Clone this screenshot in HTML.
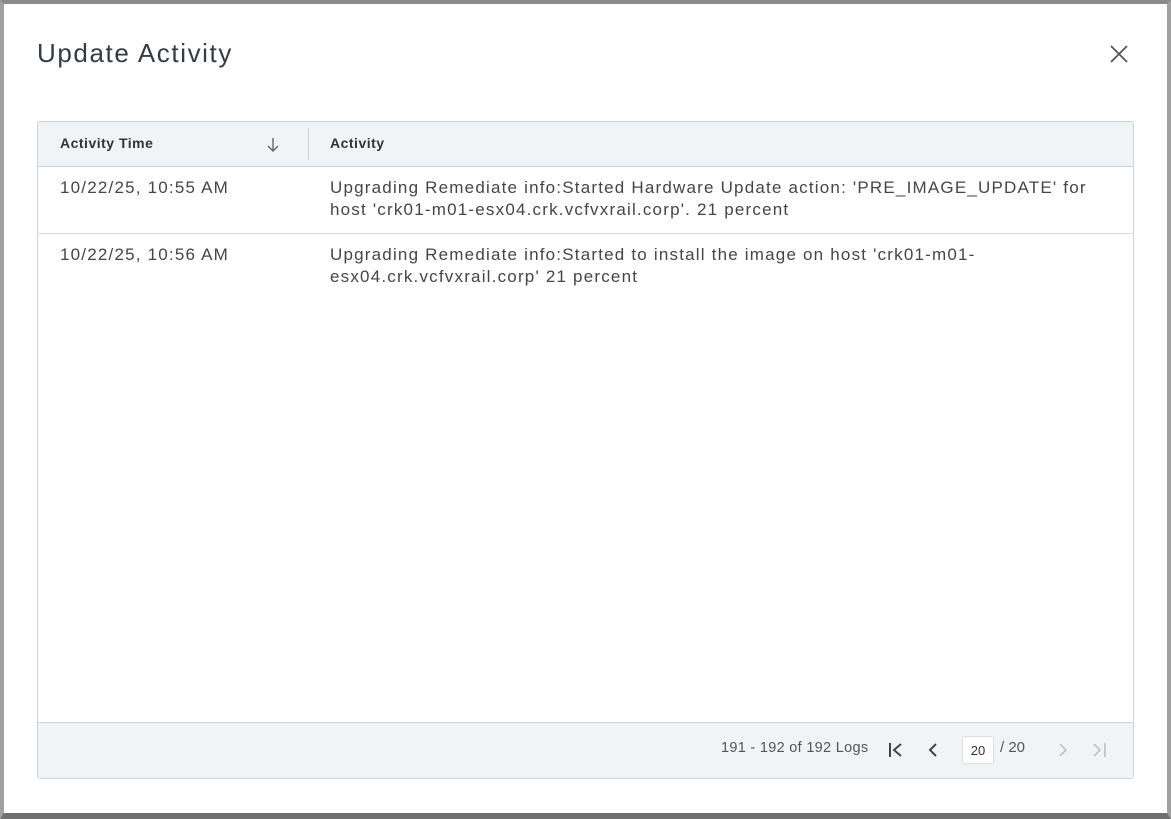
<!DOCTYPE html><html><head><style>
body{margin:0;width:1171px;height:819px;background:#fff;font-family:"Liberation Sans",sans-serif;overflow:hidden;position:relative}
.frame{position:absolute;left:0;top:0;width:1171px;height:819px;box-sizing:border-box;border-top:4px solid #8a8a8a;border-left:4px solid #a0a0a0;border-right:4px solid #a0a0a0;border-bottom:6px solid #707070}
h1{position:absolute;left:37px;top:38px;margin:0;font-size:26px;font-weight:normal;color:#333c45;letter-spacing:1.6px}
.x{position:absolute;left:1109px;top:44px}
.grid{position:absolute;left:37px;top:121px;width:1097px;height:658px;border:1px solid #ccd3d9;border-radius:3px;box-sizing:border-box;overflow:hidden}
.hd{height:44px;background:#f1f4f6;border-bottom:1px solid #ccd3d9;position:relative;font-size:14px;font-weight:bold;color:#333;letter-spacing:0.5px}
.hd span{position:absolute;top:13px}
.row{border-bottom:1px solid #d7dde2;position:relative;font-size:17px;color:#454545;line-height:22px;letter-spacing:1.2px}
.row .t{position:absolute;left:22px;top:10px}
.row .a{position:absolute;left:292px;top:10px;white-space:nowrap}
.ft{position:absolute;left:0;right:0;bottom:0;height:55px;background:#f1f4f6;border-top:1px solid #ccd3d9;font-size:14.5px;color:#555}
</style></head><body>
<div class="frame"></div>
<h1>Update Activity</h1>
<svg class="x" width="20" height="20" viewBox="0 0 20 20"><path d="M2 2L18 18M18 2L2 18" stroke="#555" stroke-width="1.8"/></svg>
<div class="grid">
<div class="hd"><span style="left:22px">Activity Time</span>
<svg style="position:absolute;left:229px;top:15px" width="12" height="16" viewBox="0 0 12 16"><path d="M6 1V14M1 9L6 14L11 9" stroke="#666" stroke-width="1.4" fill="none"/></svg>
<div style="position:absolute;left:270px;top:6px;width:1px;height:32px;background:#ccd3d9"></div>
<span style="left:292px">Activity</span></div>
<div class="row" style="height:66px"><span class="t">10/22/25, 10:55 AM</span><span class="a">Upgrading Remediate info:Started Hardware Update action: 'PRE_IMAGE_UPDATE' for<br>host 'crk01-m01-esx04.crk.vcfvxrail.corp'. 21 percent</span></div>
<div class="row" style="height:66px;border-bottom:none"><span class="t">10/22/25, 10:56 AM</span><span class="a">Upgrading Remediate info:Started to install the image on host 'crk01-m01-<br>esx04.crk.vcfvxrail.corp' 21 percent</span></div>
<div class="ft">
<span style="position:absolute;left:683px;top:17px;letter-spacing:0.3px">191 - 192 of 192 Logs</span>
<svg style="position:absolute;left:849px;top:18px" width="18" height="18" viewBox="0 0 18 18"><path d="M3 2V16M14 3L7 9L14 15" stroke="#444" stroke-width="2" fill="none"/></svg>
<svg style="position:absolute;left:888px;top:18px" width="14" height="18" viewBox="0 0 14 18"><path d="M10 3L4 9L10 15" stroke="#444" stroke-width="2" fill="none"/></svg>
<div style="position:absolute;left:924px;top:13px;width:32px;height:28px;background:#fff;border:1px solid #ddd;border-radius:3px;box-sizing:border-box;font-size:13px;text-align:center;line-height:28px;color:#333">20</div>
<span style="position:absolute;left:962px;top:16px;font-size:15px">/ 20</span>
<svg style="position:absolute;left:1018px;top:18px" width="14" height="18" viewBox="0 0 14 18"><path d="M4 3L10 9L4 15" stroke="#bbb" stroke-width="1.5" fill="none"/></svg>
<svg style="position:absolute;left:1053px;top:18px" width="18" height="18" viewBox="0 0 18 18"><path d="M3 3L9 9L3 15M14 2V16" stroke="#bbb" stroke-width="1.5" fill="none"/></svg>
</div>
</div>
</body></html>
